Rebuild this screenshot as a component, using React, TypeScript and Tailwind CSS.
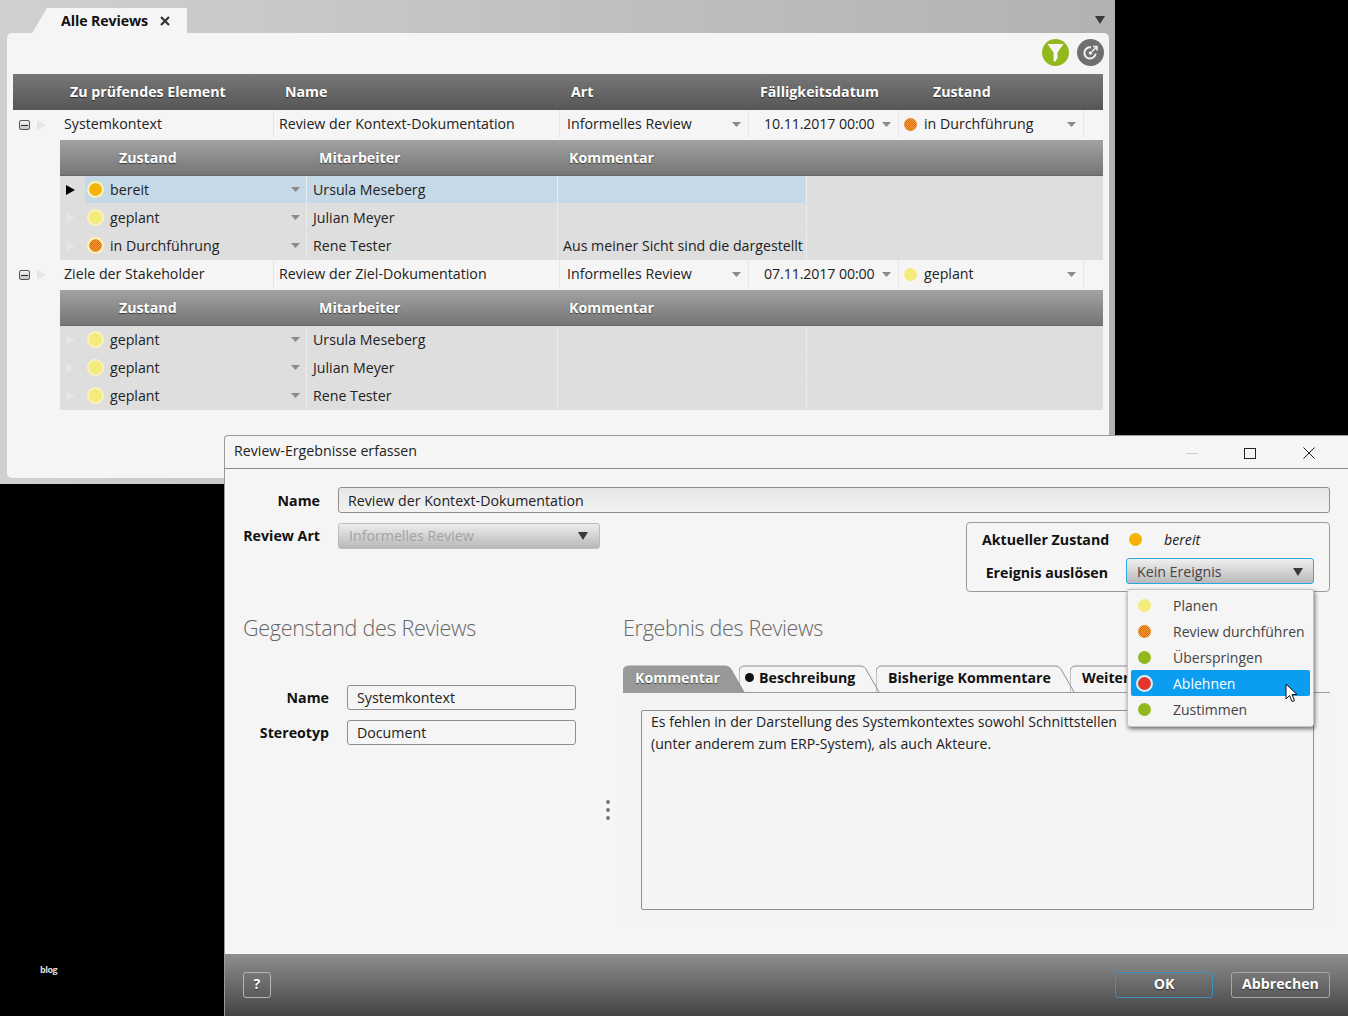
import React from "react";

const bodyFont = "font-['Open_Sans','Noto_Sans',sans-serif]";
const mainCols = "grid-cols-[47px_213px_286px_189px_150px_186px_19px]";
const subCols = "grid-cols-[25px_221px_251px_250px_296px]";
const labelShadow = "[text-shadow:0_1px_1px_rgba(0,0,0,0.55)]";

type DotKind = "ready" | "planned" | "running" | "green" | "red";

const Dot: React.FC<{ kind: DotKind; ring?: boolean }> = ({ kind, ring }) => {
    const fill = {
        ready: "bg-[#f5b30a]",
        planned: "bg-[#f4ec7a]",
        running:
            "bg-[conic-gradient(#d9651e_25%,#f7a52a_0_50%,#d9651e_0_75%,#f7a52a_0)] bg-[length:2px_2px]",
        green: "bg-[#93b81e]",
        red: "bg-[#e5352b]",
    }[kind];
    return (
        <span
            className={`block shrink-0 w-[13px] h-[13px] rounded-full ${fill} ${
                ring ? "outline-2 outline-[#fbf3b4]" : ""
            }`}
        />
    );
};

const Caret: React.FC = () => (
    <svg width="9" height="5" viewBox="0 0 9 5" className="shrink-0">
        <polygon points="0,0 9,0 4.5,5" fill="#8b8b8b" />
    </svg>
);

const SmallArrow: React.FC<{ active?: boolean }> = ({ active }) => (
    <svg width="9" height="10" viewBox="0 0 9 10">
        <polygon points="0,0 9,5 0,10" fill={active ? "#000000" : "#e6e6e6"} />
    </svg>
);

const DarkCaret: React.FC = () => (
    <svg width="10" height="8" viewBox="0 0 10 8">
        <polygon points="0,0 10,0 5,8" fill="#3a3a3a" />
    </svg>
);

const MainRow: React.FC<{
    element: string;
    name: string;
    date: string;
    state: string;
    kind: DotKind;
}> = ({ element, name, date, state, kind }) => (
    <div className={`grid ${mainCols} h-[30px] text-[14.2px] text-[#222]`}>
        <div className="flex items-center pl-[6px] gap-[7px]">
            <span className="flex items-center justify-center w-[11px] h-[10px] rounded-[2px] border border-[#555] bg-[linear-gradient(#f5f5f5,#c4c4c4)]">
                <span className="block w-[7px] h-[1px] bg-[#222]" />
            </span>
            <SmallArrow />
        </div>
        <div className="flex items-center h-[28px] pl-[4px]">{element}</div>
        <div className="flex items-center h-[28px] pl-[5px] border-l border-[#e6e6e6]">{name}</div>
        <div className="flex items-center justify-between h-[28px] pl-[7px] pr-[7px] border-l border-[#e6e6e6]">
            <span>Informelles Review</span>
            <Caret />
        </div>
        <div className="flex items-center justify-between h-[28px] pl-[15px] pr-[7px] border-l border-[#e6e6e6]">
            <span className="tracking-[-0.1px]">{date}</span>
            <Caret />
        </div>
        <div className="flex items-center h-[28px] pl-[5px] pr-[7px] gap-[7px] border-l border-r border-[#e6e6e6]">
            <Dot kind={kind} />
            <span className="flex-1">{state}</span>
            <Caret />
        </div>
        <div />
    </div>
);

const SubHeader: React.FC = () => (
    <div
        className={`grid ${subCols} h-[36px] bg-[linear-gradient(#a2a2a2,#757575)] border-b border-[#666] text-white font-bold text-[14.2px] ${labelShadow}`}
    >
        <div />
        <div className="flex items-center pl-[34px]">Zustand</div>
        <div className="flex items-center pl-[13px]">Mitarbeiter</div>
        <div className="flex items-center pl-[12px]">Kommentar</div>
        <div />
    </div>
);

const SubRow: React.FC<{
    state: string;
    kind: DotKind;
    person: string;
    comment?: string;
    selected?: boolean;
}> = ({ state, kind, person, comment, selected }) => {
    const cell = `h-[27px] flex items-center ${selected ? "bg-[#c5d9e7]" : ""}`;
    return (
        <div className={`grid ${subCols} h-[28px] text-[14.2px] text-[#222]`}>
            <div className="flex items-center justify-center pr-[4px]">
                <SmallArrow active={selected} />
            </div>
            <div className={`${cell} pl-[4px] pr-[6px] gap-[8px] rounded-l-[3px]`}>
                <Dot kind={kind} ring />
                <span className="flex-1">{state}</span>
                <Caret />
            </div>
            <div className={`${cell} pl-[6px] border-l border-[#ececec]`}>{person}</div>
            <div className={`${cell} pl-[5px] pr-[3px] border-l border-r border-[#ececec] whitespace-nowrap`}>
                {comment}
            </div>
            <div />
        </div>
    );
};

const ReviewsWindow: React.FC = () => (
    <div className="absolute left-0 top-0 w-[1115px] h-[484px] bg-[linear-gradient(90deg,#d0d0d0,#b2b2b2)]">
        <div className="relative h-[33px]">
            <div className="absolute left-[32px] top-[8px] w-[155px] h-[25px] bg-[#f5f5f5] [clip-path:polygon(0_100%,15px_0,100%_0,100%_100%)] flex items-center pl-[29px] gap-[12px] text-[14.2px] font-bold text-[#111] tracking-[-0.1px]">
                Alle Reviews
                <svg width="10" height="10" viewBox="0 0 10 10">
                    <path d="M1 1 L9 9 M9 1 L1 9" stroke="#333" strokeWidth="2.2" />
                </svg>
            </div>
            <div className="absolute left-[1095px] top-[16px]">
                <DarkCaret />
            </div>
        </div>
        <div className="ml-[7px] mr-[6px] h-[445px] bg-[#f5f5f5] rounded-[5px] px-[6px]">
            <div className="flex justify-end gap-[8px] h-[41px] pt-[6px] mr-[-1px]">
                <span className="flex items-center justify-center w-[27px] h-[27px] rounded-full bg-[#93b81e]">
                    <svg width="17" height="19" viewBox="0 0 17 19">
                        <path d="M0.5 1 H16.5 L10.5 9.5 V15 L8.5 18.5 L6.5 18.5 V9.5 Z" fill="#f5f5f5" />
                    </svg>
                </span>
                <span className="flex items-center justify-center w-[27px] h-[27px] rounded-full bg-[#6f6f6f]">
                    <svg width="17" height="17" viewBox="0 0 17 17" fill="none">
                        <path d="M13.6 9.5 A5.6 5.6 0 1 1 9 3.4" stroke="#f0f0f0" strokeWidth="2" />
                        <circle cx="8.5" cy="9" r="1.8" fill="#f0f0f0" />
                        <path d="M10 7.5 L14 3.5 M11 2.5 H15 V6.5" stroke="#f0f0f0" strokeWidth="1.6" />
                    </svg>
                </span>
            </div>
            <div
                className={`grid ${mainCols} h-[36px] bg-[linear-gradient(#777777,#565656)] text-white font-bold text-[14.2px] ${labelShadow}`}
            >
                <div />
                <div className="flex items-center pl-[10px] whitespace-nowrap">Zu prüfendes Element</div>
                <div className="flex items-center pl-[12px]">Name</div>
                <div className="flex items-center pl-[12px]">Art</div>
                <div className="flex items-center pl-[12px] whitespace-nowrap">Fälligkeitsdatum</div>
                <div className="flex items-center pl-[35px]">Zustand</div>
                <div />
            </div>
            <MainRow
                element="Systemkontext"
                name="Review der Kontext-Dokumentation"
                date="10.11.2017 00:00"
                state="in Durchführung"
                kind="running"
            />
            <div className="ml-[47px] bg-[#dedede]">
                <SubHeader />
                <SubRow state="bereit" kind="ready" person="Ursula Meseberg" selected />
                <SubRow state="geplant" kind="planned" person="Julian Meyer" />
                <SubRow
                    state="in Durchführung"
                    kind="running"
                    person="Rene Tester"
                    comment="Aus meiner Sicht sind die dargestellt"
                />
            </div>
            <MainRow
                element="Ziele der Stakeholder"
                name="Review der Ziel-Dokumentation"
                date="07.11.2017 00:00"
                state="geplant"
                kind="planned"
            />
            <div className="ml-[47px] bg-[#dedede]">
                <SubHeader />
                <SubRow state="geplant" kind="planned" person="Ursula Meseberg" />
                <SubRow state="geplant" kind="planned" person="Julian Meyer" />
                <SubRow state="geplant" kind="planned" person="Rene Tester" />
            </div>
        </div>
    </div>
);

const Tab: React.FC<{ width: number; active?: boolean; dot?: boolean; text: string; pad: number; className?: string }> = ({
    width,
    active,
    dot,
    text,
    pad,
    className,
}) => {
    const path = `M0 27 V7 Q0 1 6 1 H${width - 20} Q${width - 15} 1 ${width - 13} 6 L${width - 1} 27`;
    return (
        <div
            className={`relative h-[27px] pb-[2px] shrink-0 flex items-center font-bold text-[14.2px] whitespace-nowrap ${
                active ? `text-white ${labelShadow}` : "text-[#111]"
            } ${className ?? ""}`}
            style={{ width, paddingLeft: pad }}
        >
            <svg width={width} height="27" className="absolute left-0 top-0">
                <path
                    d={path}
                    fill={active ? "#999999" : "none"}
                    stroke={active ? "#999999" : "#8e8e8e"}
                    strokeWidth="1"
                />
            </svg>
            {dot && <span className="relative block w-[9px] h-[9px] rounded-full bg-[#111] mr-[5px]" />}
            <span className="relative">{text}</span>
        </div>
    );
};

const Field: React.FC<{ value: string }> = ({ value }) => (
    <div className="flex items-center w-[229px] h-[25px] pl-[9px] border border-[#8f8f8f] rounded-[3px] text-[14.2px] text-[#222]">
        {value}
    </div>
);

const EVENTS: { label: string; kind: DotKind; active?: boolean }[] = [
    { label: "Planen", kind: "planned" },
    { label: "Review durchführen", kind: "running" },
    { label: "Überspringen", kind: "green" },
    { label: "Ablehnen", kind: "red", active: true },
    { label: "Zustimmen", kind: "green" },
];

const EventMenu: React.FC = () => (
    <div className="absolute left-[902px] top-[120px] w-[187px] h-[138px] pt-[2px] px-[3px] bg-[#f5f5f5] border border-[#c4c4c4] rounded-[3px] shadow-[1px_2px_4px_rgba(0,0,0,0.55)] text-[14px] text-[#444]">
        {EVENTS.map((item) => (
            <div
                key={item.label}
                className={`flex items-center h-[26px] pl-[7px] whitespace-nowrap rounded-[2px] ${
                    item.active ? "bg-[#0a9df0] text-white" : ""
                }`}
            >
                <span className={item.active ? "rounded-full outline-2 outline-[#e8e8e8]" : ""}>
                    <Dot kind={item.kind} />
                </span>
                <span className="ml-[22px]">{item.label}</span>
            </div>
        ))}
        <svg width="13" height="20" viewBox="0 0 13 20" className="absolute left-[157px] top-[93px]">
            <path d="M1 1 V16 L4.5 12.5 L7 18.5 L9.5 17.5 L7 11.5 H12 Z" fill="#ffffff" stroke="#111" strokeWidth="1" />
        </svg>
    </div>
);

const ResultDialog: React.FC = () => (
    <div className="absolute left-[224px] top-[435px] w-[1124px] h-[581px] flex flex-col bg-[#f5f5f5] border-l border-t border-[#9a9a9a] rounded-tl-[4px]">
        <div className="flex items-center justify-between h-[33px] shrink-0 border-b border-[#8a8a8a] pl-[9px] pb-[3px] text-[14.2px] text-[#222]">
            <span>Review-Ergebnisse erfassen</span>
            <div className="flex items-center h-full pt-[5px]">
                <span className="block w-[12px] h-[1px] bg-[#cfcfcf] mr-[46px]" />
                <span className="block w-[12px] h-[11px] border border-[#222] mr-[47px]" />
                <svg width="12" height="12" viewBox="0 0 12 12" className="mr-[33px]">
                    <path d="M0.5 0.5 L11.5 11.5 M11.5 0.5 L0.5 11.5" stroke="#222" strokeWidth="1" />
                </svg>
            </div>
        </div>

        <div className="relative flex-1 pt-[18px] pl-[18px] pr-[18px] text-[14.2px] text-[#222]">
            <div className="flex items-center h-[26px]">
                <span className="w-[77px] pt-[1px] text-right font-bold text-[#111]">Name</span>
                <div className="flex items-center flex-1 h-full ml-[18px] pl-[9px] pt-[1px] border border-[#8f8f8f] rounded-[3px] bg-[linear-gradient(#e6e6e6,#f2f2f2)]">
                    Review der Kontext-Dokumentation
                </div>
            </div>

            <div className="flex justify-between mt-[9px]">
                <div className="flex items-center h-[26px] mt-[1px]">
                    <span className="w-[77px] text-right font-bold text-[#111] whitespace-nowrap">Review Art</span>
                    <div className="flex items-center justify-between w-[262px] h-full ml-[18px] pl-[10px] pr-[11px] border border-[#bdbdbd] rounded-[3px] bg-[linear-gradient(#ededed,#b8b8b8)] text-[#a2a2a2]">
                        Informelles Review
                        <DarkCaret />
                    </div>
                </div>
                <div className="w-[364px] h-[70px] border border-[#9a9a9a] rounded-[4px] pl-[15px] pt-[5px]">
                    <div className="flex items-center h-[23px]">
                        <span className="w-[126px] text-right font-bold text-[#111] whitespace-nowrap">Aktueller Zustand</span>
                        <span className="ml-[21px]">
                            <Dot kind="ready" />
                        </span>
                        <span className="ml-[22px] italic">bereit</span>
                    </div>
                    <div className="flex items-center h-[26px] mt-[7px]">
                        <span className="w-[126px] pt-[3px] text-right font-bold text-[#111] whitespace-nowrap">Ereignis auslösen</span>
                        <div className="flex items-center justify-between w-[188px] h-[26px] ml-[18px] pl-[10px] pr-[10px] pt-[1px] border border-[#2aa6e0] rounded-[3px] bg-[linear-gradient(#f0f0f0,#b9b9b9)] text-[#444]">
                            Kein Ereignis
                            <DarkCaret />
                        </div>
                    </div>
                </div>
            </div>

            <div className="flex mt-[21px]">
                <div className="w-[380px] shrink-0">
                    <h2 className="text-[21.5px] leading-[30px] font-light text-[#666] tracking-[-0.3px]">
                        Gegenstand des Reviews
                    </h2>
                    <div className="mt-[42px] flex flex-col gap-[10px]">
                        <div className="flex items-center">
                            <span className="w-[86px] text-right font-bold text-[#111]">Name</span>
                            <span className="ml-[18px]">
                                <Field value="Systemkontext" />
                            </span>
                        </div>
                        <div className="flex items-center">
                            <span className="w-[86px] text-right font-bold text-[#111]">Stereotyp</span>
                            <span className="ml-[18px]">
                                <Field value="Document" />
                            </span>
                        </div>
                    </div>
                </div>
                <div className="relative flex-1">
                    <span className="absolute left-[-17px] top-[187px] flex flex-col gap-[4px]">
                        <span className="block w-[4px] h-[4px] rounded-full bg-[#777]" />
                        <span className="block w-[4px] h-[4px] rounded-full bg-[#777]" />
                        <span className="block w-[4px] h-[4px] rounded-full bg-[#777]" />
                    </span>
                    <h2 className="text-[21.5px] leading-[30px] font-light text-[#666] tracking-[-0.3px]">
                        Ergebnis des Reviews
                    </h2>
                    <div className="flex mt-[22px] h-[27px]">
                        <Tab width={122} text="Kommentar" pad={12} active />
                        <Tab width={141} text="Beschreibung" pad={6} dot className="ml-[-6px]" />
                        <Tab width={199} text="Bisherige Kommentare" pad={12} className="ml-[-4px]" />
                        <Tab width={110} text="Weitere" pad={12} className="ml-[-5px]" />
                    </div>
                    <div className="h-[233px] border-t border-[#9a9a9a] bg-[#f4f4f4] pt-[17px] pl-[18px] pr-[16px]">
                        <div className="h-[200px] border border-[#8f8f8f] rounded-[2px] pl-[9px] leading-[22px] text-[14.1px] text-[#222]">
                            Es fehlen in der Darstellung des Systemkontextes sowohl Schnittstellen
                            <br />
                            (unter anderem zum ERP-System), als auch Akteure.
                        </div>
                    </div>
                </div>
            </div>

            <EventMenu />
        </div>

        <div className="flex items-center justify-between shrink-0 h-[62px] pl-[18px] pr-[18px] bg-[linear-gradient(#8e8e8e,#444444)] text-white font-bold text-[14.2px]">
            <span className={`flex items-center justify-center w-[28px] h-[26px] pb-[2px] rounded-[3px] border border-[#b5b5b5] ${labelShadow}`}>
                ?
            </span>
            <div className="flex gap-[18px]">
                <span className={`flex items-center justify-center w-[98px] h-[26px] pb-[2px] rounded-[3px] border border-[#3f8fc0] ${labelShadow}`}>
                    OK
                </span>
                <span className={`flex items-center justify-center w-[99px] h-[26px] pb-[2px] rounded-[3px] border border-[#a8a8a8] ${labelShadow}`}>
                    Abbrechen
                </span>
            </div>
        </div>
    </div>
);

const App: React.FC = () => (
    <div className={`relative w-[1348px] h-[1016px] overflow-hidden bg-black ${bodyFont}`}>
        <ReviewsWindow />
        <span className="absolute left-[40px] top-[964px] text-[9px] leading-[12px] font-bold text-[#dddddd] tracking-[-0.5px]">
            blog
        </span>
        <ResultDialog />
    </div>
);

export default App;
